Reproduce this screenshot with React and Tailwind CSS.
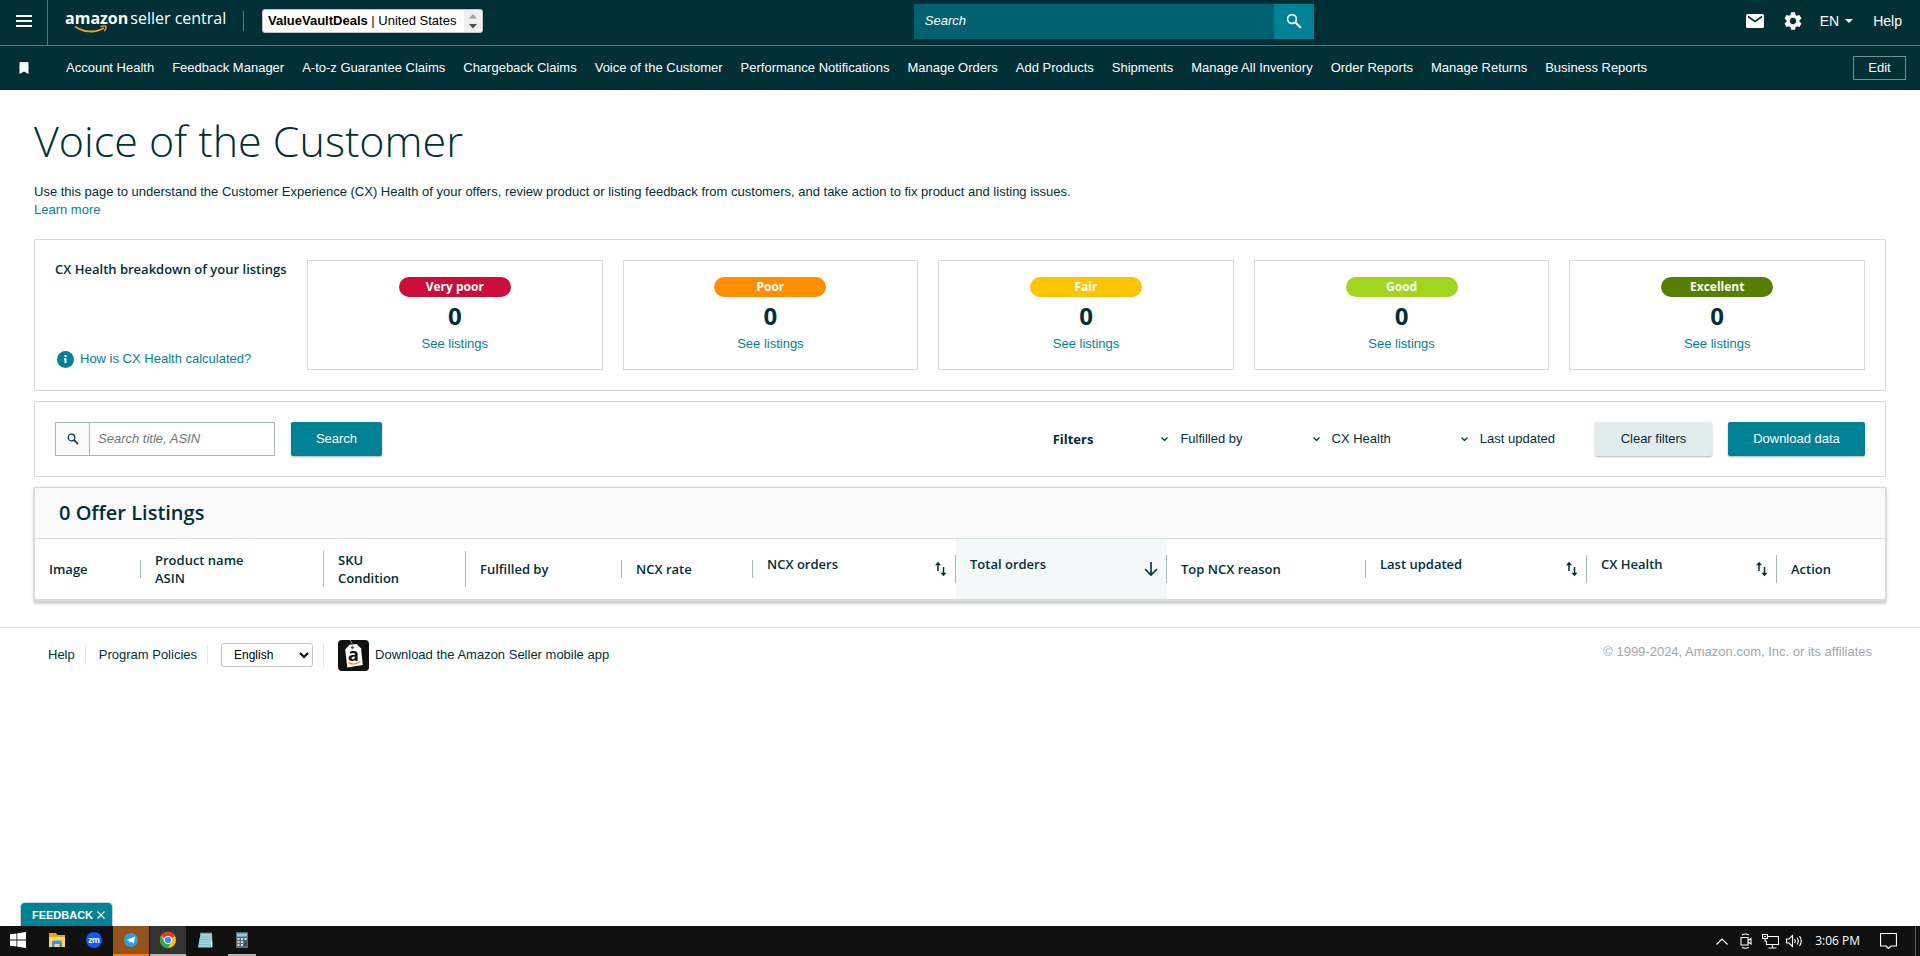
import clsx from 'clsx'

const NAV_LINKS = [
  'Account Health',
  'Feedback Manager',
  'A-to-z Guarantee Claims',
  'Chargeback Claims',
  'Voice of the Customer',
  'Performance Notifications',
  'Manage Orders',
  'Add Products',
  'Shipments',
  'Manage All Inventory',
  'Order Reports',
  'Manage Returns',
  'Business Reports',
]

const HEALTH = [
  { label: 'Very poor', color: 'bg-[#cc0c39]' },
  { label: 'Poor', color: 'bg-[#ff8f00]' },
  { label: 'Fair', color: 'bg-[#ffc400]' },
  { label: 'Good', color: 'bg-[#a2d61e]' },
  { label: 'Excellent', color: 'bg-[#538000]' },
]

const COLUMNS = [
  { lines: ['Image'], width: 'w-[106px]' },
  { lines: ['Product name', 'ASIN'], width: 'w-[183px]' },
  { lines: ['SKU', 'Condition'], width: 'w-[142px]' },
  { lines: ['Fulfilled by'], width: 'w-[156px]' },
  { lines: ['NCX rate'], width: 'w-[131px]' },
  { lines: ['NCX orders'], width: 'w-[203px]', sort: 'both' },
  { lines: ['Total orders'], width: 'w-[211px]', sort: 'down' },
  { lines: ['Top NCX reason'], width: 'w-[199px]' },
  { lines: ['Last updated'], width: 'w-[221px]', sort: 'both' },
  { lines: ['CX Health'], width: 'w-[190px]', sort: 'both' },
  { lines: ['Action'], width: 'w-[109px]' },
]

function SearchIcon({ className }) {
  return (
    <svg viewBox="0 0 16 16" className={className} fill="none" stroke="currentColor" strokeWidth="1.6" aria-hidden="true">
      <circle cx="6" cy="6" r="4.4" />
      <path d="M9.2 9.2 14.8 14.8" strokeWidth="2" />
    </svg>
  )
}

function SortIcon() {
  return (
    <svg viewBox="0 0 12 16" className="h-4 w-3 shrink-0" aria-hidden="true">
      <path d="M3 10V2M8.500 6v8" fill="none" stroke="currentColor" strokeWidth="1.500" />
      <path d="M0 4.200 3 .8l3 3.400zM5.500 11.800l3 3.400 3-3.400z" fill="currentColor" />
    </svg>
  )
}

function DownIcon() {
  return (
    <svg viewBox="0 0 14 16" className="h-4 w-3.5 shrink-0" fill="none" stroke="currentColor" strokeWidth="1.6" aria-hidden="true">
      <path d="M7 1v13M1 8 7 14l6-6" />
    </svg>
  )
}

function TopBar() {
  return (
    <div className="flex h-[46px] items-center border-b border-[#5c7378] pb-[3px]">
      <button aria-label="Menu" className="-mb-[3px] flex h-[45px] w-12 shrink-0 items-center justify-center border-r border-[#5c7378] pb-[3px]">
        <svg viewBox="0 0 16 12" className="h-3 w-4" stroke="white" strokeWidth="2">
          <path d="M0 1h16M0 6h16M0 11h16" />
        </svg>
      </button>
      <a href="#" className="relative ml-[17px] flex h-full w-[161px] shrink-0 items-center gap-0.5 pb-1.5 font-['Open_Sans',sans-serif] text-base leading-5 whitespace-nowrap">
        <span className="font-bold">amazon</span>
        <span>seller central</span>
        <svg viewBox="0 0 34 9" className="absolute top-[25px] left-[9px] h-[9px] w-[34px]" fill="none" stroke="#f69a2b">
          <path d="M1 1.5C9 7.5 21 8.2 30 3" strokeWidth="1.8" />
          <path d="M26.5 1.6c2.6-.8 5-.8 5.4-.2.4.8-.3 3-1.6 4.8" strokeWidth="1.4" />
        </svg>
      </a>
      <div className="mr-[18px] ml-[17px] h-5 w-px bg-[#5c7378]" />
      <button className="flex h-6 shrink-0 overflow-hidden rounded-[3px] border border-[#c5c5c5] bg-white text-[13px] leading-[22px] text-black">
        <span className="pr-2 pl-[5px]">
          <b>ValueVaultDeals</b> | United States
        </span>
        <svg viewBox="0 0 18 22" className="h-[22px] w-[18px] bg-[#efefef]">
          <path d="M5 8.5 9 4l4 4.5z" fill="#a0a0a0" />
          <path d="M5 14l4 4.500 4-4.500z" fill="#4d4d4d" />
        </svg>
      </button>
      <form className="mr-[432px] ml-auto flex h-[35px] w-[400px]">
        <input type="text" placeholder="Search" aria-label="Search" className="min-w-0 flex-1 bg-[#006170] px-[11px] text-[13px] text-white italic outline-none placeholder:text-white" />
        <button type="button" aria-label="Submit search" className="flex w-10 items-center justify-center bg-[#008296]">
          <SearchIcon className="size-4" />
        </button>
      </form>
      <div className="flex shrink-0 items-center pr-[18px] text-sm">
        <button aria-label="Messages">
          <svg viewBox="0 0 18 14" className="h-3.5 w-[18px]">
            <rect width="18" height="14" rx="1.5" fill="white" />
            <path d="M2 2.500 9 7.500l7-5" fill="none" stroke="#002f36" strokeWidth="1.6" />
          </svg>
        </button>
        <button aria-label="Settings" className="ml-5">
          <svg viewBox="2 2 20 20" className="size-[18px]" fill="white">
            <path d="M19.140 12.940c.04-.3.060-.61.060-.94 0-.32-.02-.64-.07-.94l2.030-1.580a.49.490 0 0 0 .12-.61l-1.920-3.320a.488.488 0 0 0-.59-.22l-2.390.96c-.5-.38-1.030-.7-1.620-.94l-.36-2.540a.484.484 0 0 0-.48-.41h-3.840c-.24 0-.43.17-.47.41l-.36 2.540c-.59.240-1.130.570-1.620.940l-2.390-.96c-.22-.08-.47 0-.59.220L2.740 8.870c-.12.210-.08.470.120.610l2.030 1.580c-.05.300-.09.630-.09.940s.02.640.07.940l-2.030 1.580a.49.490 0 0 0-.12.610l1.920 3.320c.12.220.370.290.590.220l2.390-.96c.5.380 1.030.7 1.620.94l.36 2.540c.05.240.240.410.480.410h3.840c.24 0 .44-.17.470-.41l.36-2.540c.59-.24 1.130-.56 1.620-.94l2.390.96c.22.080.470 0 .59-.22l1.920-3.320c.12-.22.070-.47-.12-.61l-2.010-1.580zM12 15.600c-1.980 0-3.600-1.620-3.600-3.600s1.620-3.600 3.600-3.600 3.600 1.620 3.600 3.600-1.620 3.600-3.600 3.600z" />
          </svg>
        </button>
        <button className="ml-[18px] flex items-center gap-1.5">
          EN
          <svg viewBox="0 0 8 4" className="h-1 w-2" fill="white">
            <path d="M0 0h8L4 4z" />
          </svg>
        </button>
        <a href="#" className="ml-5">Help</a>
      </div>
    </div>
  )
}

function NavBar() {
  return (
    <nav className="flex h-11 items-center pr-3.5 text-[13px] whitespace-nowrap">
      <button aria-label="Bookmarks" className="flex w-12 shrink-0 justify-center">
        <svg viewBox="0 0 10 12" className="h-3 w-2.5" fill="white">
          <path d="M1.500 0h7Q9.500 0 9.500 1v11L5 9.500.5 12V1q0-1 1-1z" />
        </svg>
      </button>
      <div className="ml-[18px] flex gap-[18px]">
        {NAV_LINKS.map((link) => (
          <a key={link} href="#">{link}</a>
        ))}
      </div>
      <button className="ml-auto h-6 w-[53px] border border-[#7b8f92]">Edit</button>
    </nav>
  )
}

function HealthPanel() {
  return (
    <section className="flex gap-5 border border-[#d5dbdb] p-5">
      <div className="flex w-[232px] shrink-0 flex-col justify-between pb-0.5">
        <h2 className="font-['Open_Sans',sans-serif] text-[13px] leading-[18px] font-semibold whitespace-nowrap">CX Health breakdown of your listings</h2>
        <a href="#" className="flex items-center gap-1.5 pl-0.5 text-[#008296]">
          <svg viewBox="0 0 17 17" className="size-[17px]">
            <circle cx="8.500" cy="8.500" r="8.500" fill="#008296" />
            <path d="M7.500 4h2v2h-2zM7 7.200h2.500V12h-2V8.500H7z" fill="white" />
          </svg>
          How is CX Health calculated?
        </a>
      </div>
      <div className="grid flex-1 grid-cols-5 gap-5">
        {HEALTH.map(({ label, color }) => (
          <div key={label} className="flex h-[110px] flex-col items-center border border-[#d5dbdb] pt-4">
            <span className={clsx("h-5 w-28 rounded-[10px] text-center font-['Open_Sans',sans-serif] text-xs leading-5 font-bold text-white", color)}>{label}</span>
            <span className="mt-[5px] font-['Open_Sans',sans-serif] text-2xl leading-7 font-bold">0</span>
            <a href="#" className="mt-[5px] text-[#008296]">See listings</a>
          </div>
        ))}
      </div>
    </section>
  )
}

function FilterButton({ children }) {
  return (
    <button className="flex items-center gap-3">
      <svg viewBox="0 0 7 4" className="h-1 w-[7px]" fill="none" stroke="currentColor" strokeWidth="1.2">
        <path d="M.5.5l3 3 3-3" />
      </svg>
      {children}
    </button>
  )
}

function FilterPanel() {
  return (
    <section className="mt-2.5 flex items-center border border-[#d5dbdb] px-5 py-5">
      <div className="flex h-[34px] w-[220px] border border-[#aab7b8]">
        <span className="flex w-[34px] items-center justify-center border-r border-[#aab7b8] bg-[#fafafa]">
          <SearchIcon className="size-3" />
        </span>
        <input type="text" placeholder="Search title, ASIN" aria-label="Search title, ASIN" className="min-w-0 flex-1 px-2 italic outline-none placeholder:text-[#6c7778]" />
      </div>
      <button className="ml-4 h-[34px] w-[91px] rounded-[2px] bg-[#008296] text-white shadow-[0_1px_2px_rgba(0,0,0,0.3)]">Search</button>
      <div className="ml-auto flex items-center">
        <span className="mr-[68px] font-['Open_Sans',sans-serif] font-bold">Filters</span>
        <div className="mr-10 flex gap-[70px]">
          <FilterButton>Fulfilled by</FilterButton>
          <FilterButton>CX Health</FilterButton>
          <FilterButton>Last updated</FilterButton>
        </div>
        <button className="h-[34px] w-[117px] rounded-[2px] bg-[#e3eced] shadow-[0_1px_2px_rgba(0,0,0,0.3)]">Clear filters</button>
        <button className="ml-4 h-[34px] w-[137px] rounded-[2px] bg-[#008296] text-white shadow-[0_1px_2px_rgba(0,0,0,0.3)]">Download data</button>
      </div>
    </section>
  )
}

function ListingsTable() {
  return (
    <section className="mt-2.5 border border-b-[3px] border-[#d5dbdb] font-['Open_Sans',sans-serif] shadow-[0_1px_3px_rgba(0,0,0,0.3)]">
      <h2 className="h-[51px] border-b border-[#d5dbdb] bg-[#fafafa] pl-6 text-xl leading-[50px] font-semibold">0 Offer Listings</h2>
      <table className="w-full table-fixed">
        <thead>
          <tr className="h-[60px]">
            {COLUMNS.map(({ lines, width, sort }, i) => (
              <th key={lines[0]} className={clsx('p-0 text-left align-middle text-[13px] leading-[18px] font-semibold', width, sort === 'down' && 'bg-[#f4f8f9]')}>
                <div className={clsx('flex justify-between pl-3.5', sort && 'h-7 pr-2', i < COLUMNS.length - 1 && 'border-r border-[#aab7b8]')}>
                  <span>
                    {lines.map((line) => (
                      <span key={line} className="block">{line}</span>
                    ))}
                  </span>
                  {sort && (
                    <button aria-label={`Sort by ${lines[0]}`} className="self-center">
                      {sort === 'both' ? <SortIcon /> : <DownIcon />}
                    </button>
                  )}
                </div>
              </th>
            ))}
          </tr>
        </thead>
      </table>
    </section>
  )
}

function Footer() {
  return (
    <footer className="mt-[25px] flex items-start justify-between border-t border-[#e7e7e7] px-12 pt-[11px]">
      <div className="flex h-8 items-center">
        <a href="#">Help</a>
        <div className="mr-[13px] ml-2.5 h-5 w-px bg-[#e7e7e7]" />
        <a href="#">Program Policies</a>
        <div className="mr-[13px] ml-2.5 h-5 w-px bg-[#e7e7e7]" />
        <select aria-label="Language" className="h-6 w-[92px] rounded-[3px] border border-[#c5c5c5] bg-white pl-2 text-xs text-black">
          <option>English</option>
        </select>
        <div className="mr-3.5 ml-2.5 h-6 w-px bg-[#e7e7e7]" />
        <a href="#" className="flex items-center gap-1.5">
          <svg viewBox="0 0 31 31" className="size-[31px]">
            <rect width="31" height="31" rx="4" fill="#111" />
            <path d="M11.500 4.800 18.500 4l4.500 4.200L24.800 25l-15.500 2.500L7.200 9.500z" fill="white" />
            <circle cx="14.500" cy="7.500" r="1.200" fill="#111" />
            <path d="M14.500 7.500c0-3-.5-5.500-2.500-7.500" stroke="#999" fill="none" />
            <text x="10" y="21" fontSize="18" fontWeight="bold" fontFamily="Open Sans" fill="#111">a</text>
            <path d="M10.500 22.500c3.500 2.200 8.500 1.800 12-1" fill="none" stroke="#f69a2b" strokeWidth="1.500" />
          </svg>
          Download the Amazon Seller mobile app
        </a>
      </div>
      <span className="pt-1 text-[#a2a6a8]">© 1999-2024, Amazon.com, Inc. or its affiliates</span>
    </footer>
  )
}

function TaskbarItem({ label, className, children }) {
  return (
    <button aria-label={label} className={clsx('flex h-full w-9 items-center justify-center border-b-2', className || 'border-transparent')}>
      {children}
    </button>
  )
}

function Taskbar() {
  return (
    <div className="flex h-[30px] items-center bg-[#101010] text-xs text-white">
      <div className="flex h-full gap-px">
        <TaskbarItem label="Start">
          <svg viewBox="0 0 16 16" className="size-4" fill="white">
            <path d="M0 2.300 6.500 1.400v6.200H0zM7.300 1.300 16 0v7.600H7.300zM0 8.400h6.500v6.200L0 13.700zM7.300 8.400H16V16l-8.700-1.300z" />
          </svg>
        </TaskbarItem>
        <TaskbarItem label="File Explorer" className="ml-0.5 border-transparent">
          <svg viewBox="0 0 16 14" className="h-3.5 w-4">
            <path d="M0 0h7l1.500 2H16v12H0z" fill="#e8a317" />
            <path d="M0 4h16v10H0z" fill="#ffd766" />
            <path d="M3 14V9.500Q3 7.500 5 7.500h6q2 0 2 2V14h-2.500v-3h-5v3z" fill="#3b97e0" />
          </svg>
        </TaskbarItem>
        <TaskbarItem label="Zoom">
          <svg viewBox="0 0 16 16" className="size-4">
            <circle cx="8" cy="8" r="8" fill="#0b5cff" />
            <text x="8" y="10.500" textAnchor="middle" fontSize="8" fontWeight="bold" fontFamily="Noto Sans" fill="white">zm</text>
          </svg>
        </TaskbarItem>
        <TaskbarItem label="Telegram" className="border-[#ff7a00] bg-[#95521b]">
          <svg viewBox="0 0 14 14" className="size-3.5">
            <circle cx="7" cy="7" r="7" fill="#2ba0da" />
            <path d="M2.500 7 11 3.500 9.800 10.500 6.800 8.600 5.500 10 5.300 7.800z" fill="white" />
          </svg>
        </TaskbarItem>
        <TaskbarItem label="Chrome" className="border-[#b4b4ae] bg-[#333333]">
          <svg viewBox="0 0 16 16" className="size-4">
            <circle cx="8" cy="8" r="8" fill="#fbc116" />
            <path d="M8 8 1.070 4A8 8 0 0 1 14.930 4z" fill="#e33b2e" />
            <path d="M1.070 4A8 8 0 0 0 8 16l3.400-6L4.600 10z" fill="#2da94f" />
            <circle cx="8" cy="8" r="4" fill="white" />
            <circle cx="8" cy="8" r="3.100" fill="#4285f4" />
          </svg>
        </TaskbarItem>
        <TaskbarItem label="Notepad">
          <svg viewBox="0 0 16 16" className="size-4">
            <path d="M3.500 1.500H15L13.500 15.500H1z" fill="#9fd3dc" />
            <path d="M15 1.500l.5 13.500-2 .5z" fill="#e9f3f3" />
            <path d="M3 5h10M2.700 7.500h10M2.400 10h10M2 12.500h10" stroke="#6fb3c0" strokeWidth=".7" />
            <path d="M4 .5v2M6 .5v2M8 .5v2M10 .5v2M12 .5v2M14 .5v2" stroke="#ddd" strokeWidth=".8" />
          </svg>
        </TaskbarItem>
        <div className="flex h-full w-9 justify-center">
          <button aria-label="Calculator" className="flex w-7 items-center justify-center border-b-2 border-[#b4b4ae]">
            <svg viewBox="0 0 12 16" className="h-4 w-3">
              <rect width="12" height="16" fill="#5d6a73" />
              <rect x="1" y="1.500" width="10" height="3" fill="#7dd0f5" />
              <path d="M1.500 6h2v2h-2zM5 6h2v2H5zM8.500 6h2v2h-2zM1.500 9h2v2h-2zM5 9h2v2H5zM1.500 12h2v2h-2zM5 12h2v2H5z" fill="#d6dbde" />
              <path d="M8.500 9h2v5h-2z" fill="#12499b" />
            </svg>
          </button>
        </div>
      </div>
      <div className="ml-auto flex h-full items-center">
        <svg viewBox="0 0 12 7" className="h-[7px] w-3" fill="none" stroke="white" strokeWidth="1.200">
          <path d="M.5 6.500 6 1l5.500 5.500" />
        </svg>
        <svg viewBox="0 0 12 16" className="ml-3 h-4 w-3" fill="none" stroke="white" strokeWidth="1.100">
          <path d="M1 4.500h7v7.500H1zM8 7.500l3-2v5.500l-3-2M2 2Q5 0 9 2M2 14.500q3 1.500 7 0" />
        </svg>
        <svg viewBox="0 0 17 15" className="ml-2.5 h-[15px] w-[17px]" fill="none" stroke="white" strokeWidth="1.100">
          <path d="M5.500 2.500h11v8H4.500V7M10.500 10.500v3.500M6.500 14h8M.5.500h5v4h-5zM2 2.500h2M3 4.500v2.500h1.500" />
        </svg>
        <svg viewBox="0 0 17 14" className="ml-[7px] h-3.5 w-[17px]" fill="none" stroke="white" strokeWidth="1.100">
          <path d="M.5 5h2.500L6.500 1.500v11L3 9H.5zM8.500 5q1.500 2 0 4M11 3.500q2.500 3.500 0 7M13.500 2q3.500 5 0 10" />
        </svg>
        <span className="ml-3 font-['Open_Sans',sans-serif]">3:06 PM</span>
        <svg viewBox="0 0 17 16" className="ml-5 h-4 w-[17px]" fill="none" stroke="white" strokeWidth="1.200">
          <path d="M.5.5h16v12.500H11L8.500 15.500 6 13H.5z" />
        </svg>
        <div className="mr-1 ml-[18px] h-full w-px bg-[#5a5a5a]" />
      </div>
    </div>
  )
}

export default function App() {
  return (
    <div className="flex min-h-screen flex-col bg-white font-['Liberation_Sans',Arial,sans-serif] text-[13px] leading-[18px] text-[#002f36]">
      <header className="bg-[#002f36] text-white">
        <TopBar />
        <NavBar />
      </header>
      <main className="px-[34px] pt-6">
        <h1 className="font-['Open_Sans',sans-serif] text-[43px] leading-[54px] font-light">Voice of the Customer</h1>
        <p className="mt-[15px]">
          Use this page to understand the Customer Experience (CX) Health of your offers, review product or listing feedback from customers, and take action to fix product and listing issues.
        </p>
        <a href="#" className="mb-5 block text-[#008296]">Learn more</a>
        <HealthPanel />
        <FilterPanel />
        <ListingsTable />
      </main>
      <Footer />
      <div className="mt-auto flex pl-5">
        <button className="flex h-6 w-[93px] items-center justify-center gap-1 rounded-t-[5px] border border-b-0 border-[#c5d5d5] bg-[#008296] pl-1 text-[11px] font-bold text-white">
          FEEDBACK
          <svg viewBox="0 0 8 8" className="size-2" stroke="white" strokeWidth="1.200">
            <path d="M.5.5l7 7M7.500.5l-7 7" />
          </svg>
        </button>
      </div>
      <Taskbar />
    </div>
  )
}
